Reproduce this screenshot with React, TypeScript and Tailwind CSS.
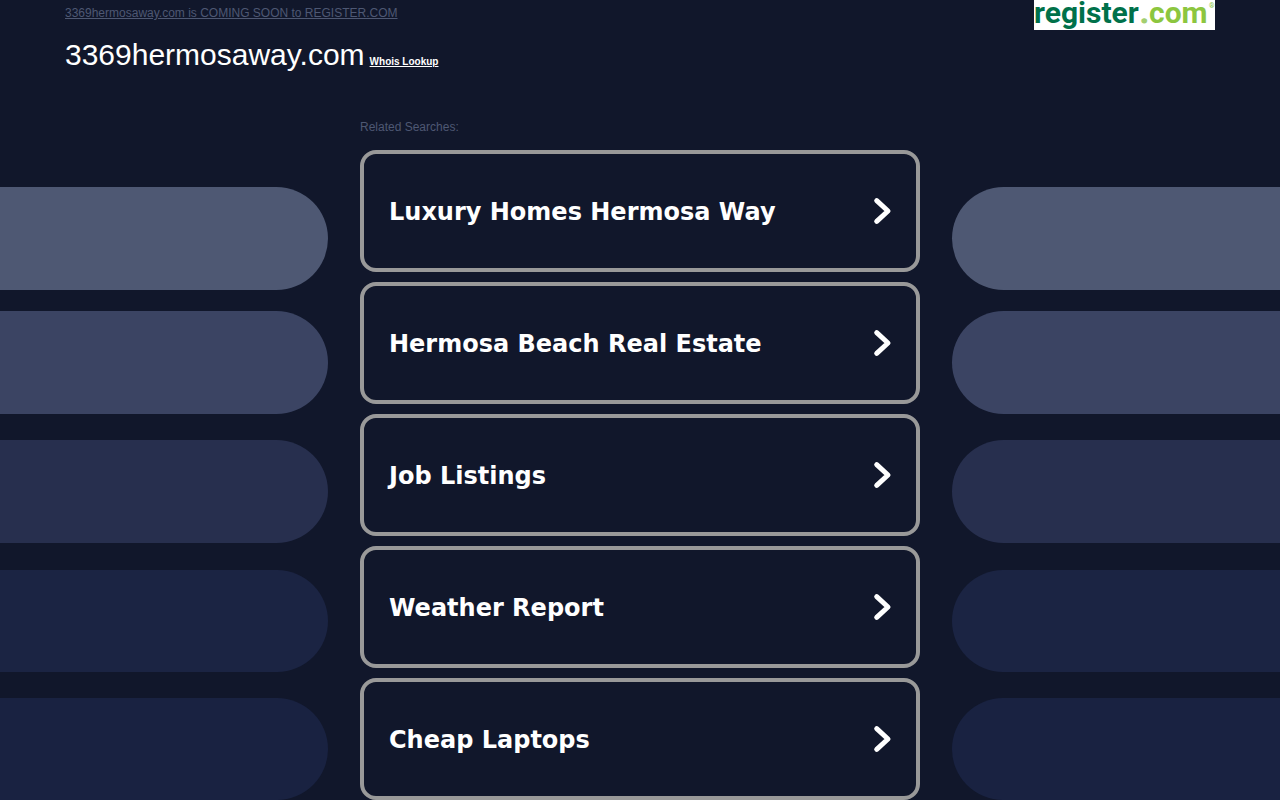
const searches = [
  "Luxury Homes Hermosa Way",
  "Hermosa Beach Real Estate",
  "Job Listings",
  "Weather Report",
  "Cheap Laptops",
];

function Chevron() {
  return (
    <svg
      className="h-7 w-5 shrink-0"
      viewBox="0 0 20 28"
      fill="none"
      stroke="currentColor"
      strokeWidth="5"
      strokeLinecap="round"
      strokeLinejoin="round"
      aria-hidden="true"
    >
      <path d="M4.7 3.6 16 14 4.7 24.4" />
    </svg>
  );
}

function Bars({ side }: { side: "left" | "right" }) {
  const shape = side === "left" ? "rounded-r-full" : "rounded-l-full";
  return (
    <div className="flex flex-col pt-[77px]" aria-hidden="true">
      <div className={`mb-[21px] h-[103px] bg-[#4e5873] ${shape}`} />
      <div className={`mb-[26px] h-[103px] bg-[#3b4463] ${shape}`} />
      <div className={`mb-[27px] h-[103px] bg-[#272f4e] ${shape}`} />
      <div className={`mb-[26px] h-[102px] bg-[#1b2443] ${shape}`} />
      <div className={`h-[102px] bg-[#192241] ${shape}`} />
    </div>
  );
}

function Logo() {
  return (
    <a href="#register" aria-label="register.com" className="block bg-white">
      <svg
        className="h-[30px] w-[181px] overflow-visible font-['Roboto','Liberation_Sans',sans-serif] text-[30px] font-bold"
        viewBox="0 0 181 30"
      >
        <text x="0" y="23" fill="#00714a">
          register
          <tspan x="106" fill="#a3cf70" stroke="#a3cf70" strokeLinejoin="round">.</tspan>
          <tspan x="115" fill="#8cc63f">com</tspan>
        </text>
        <text x="175" y="8" fill="#8cc63f" className="text-[7px]">
          ®
        </text>
      </svg>
    </a>
  );
}

export default function App() {
  return (
    <div className="min-h-screen overflow-hidden bg-[#11172b] font-['Liberation_Sans',Arial,sans-serif] text-white">
      <header className="flex h-[110px] items-start justify-between px-[65px]">
        <div>
          <a href="#coming-soon" className="block pt-[5px] text-xs leading-4 text-[#4e5873] underline">
            3369hermosaway.com is COMING SOON to REGISTER.COM
          </a>
          <div className="flex items-baseline gap-[5px] pt-4">
            <h1 className="text-[30px] leading-9">3369hermosaway.com</h1>
            <a href="#whois" className="text-[10px] font-bold underline">
              Whois Lookup
            </a>
          </div>
        </div>
        <Logo />
      </header>
      <div className="grid grid-cols-[1fr_560px_1fr] gap-x-8">
        <Bars side="left" />
        <main className="pt-2">
          <h2 className="text-xs leading-[18px] text-[#4e5873]">Related Searches:</h2>
          <ul className="flex flex-col gap-[10px] pt-[14px]">
            {searches.map((label) => (
              <li key={label}>
                <a
                  href="#search"
                  className="flex h-[122px] items-center justify-between rounded-2xl border-4 border-[#999999] pr-6 pl-[25px] font-['DejaVu_Sans',Verdana,sans-serif] text-2xl font-bold"
                >
                  <span className="pt-[2px]">{label}</span>
                  <Chevron />
                </a>
              </li>
            ))}
          </ul>
        </main>
        <Bars side="right" />
      </div>
    </div>
  );
}
